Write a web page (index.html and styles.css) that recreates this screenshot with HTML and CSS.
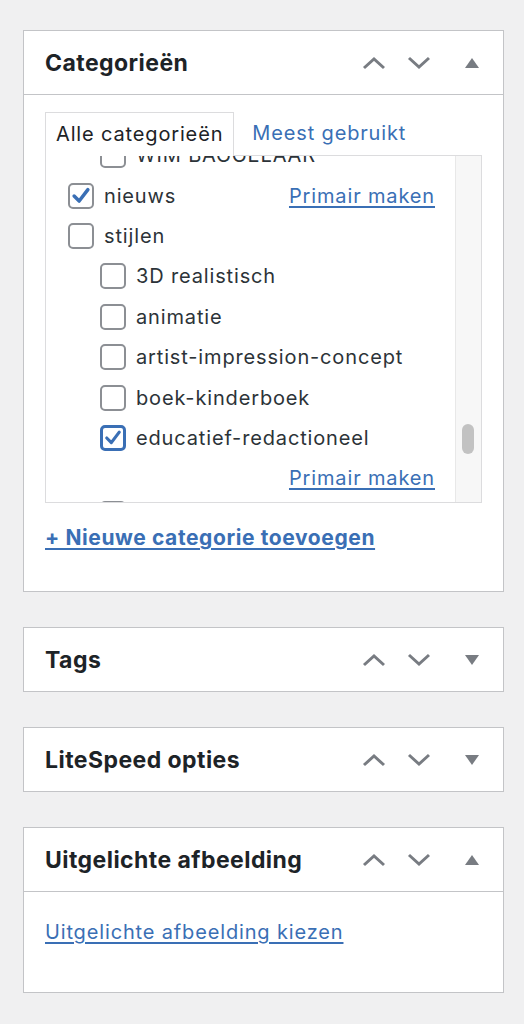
FILE: index.html
```html
<!DOCTYPE html>
<html lang="nl">
<head>
<meta charset="utf-8">
<title>Zijbalk</title>
<link rel="stylesheet" href="styles.css">
</head>
<body>
<div class="sidebar">

  <section class="box">
    <header class="box-head">
      <h2 class="box-title">Categorieën</h2>
      <div class="box-actions">
        <span class="act"><svg width="24" height="14" viewBox="0 0 24 14"><path d="M2 12 L12 3 L22 12" fill="none" stroke="currentColor" stroke-width="3"/></svg></span>
        <span class="act"><svg width="24" height="14" viewBox="0 0 24 14"><path d="M2 2 L12 11 L22 2" fill="none" stroke="currentColor" stroke-width="3"/></svg></span>
        <span class="tog"><svg width="14" height="10" viewBox="0 0 14 10"><path d="M0 10 L7 0 L14 10 Z" fill="currentColor"/></svg></span>
      </div>
    </header>
    <div class="box-body cat-body">
      <div class="tabs">
        <span class="tab active">Alle categorieën</span>
        <a class="tab link">Meest gebruikt</a>
      </div>
      <div class="catlist">
        <div class="cat-scroll">
          <ul class="cats">
            <li class="row sub"><span class="cb"></span><span class="lbl">WIM BAGGELAAR</span></li>
            <li class="row"><span class="cb checked"><svg viewBox="0 0 24 24" width="22" height="22"><path d="M4.5 12 L10 17.5 L19.5 5" fill="none" stroke="#3a6fb5" stroke-width="3.8" stroke-linecap="round" stroke-linejoin="round"/></svg></span><span class="lbl">nieuws</span><a class="primair">Primair maken</a></li>
            <li class="row"><span class="cb"></span><span class="lbl">stijlen</span></li>
            <li class="row sub"><span class="cb"></span><span class="lbl">3D realistisch</span></li>
            <li class="row sub"><span class="cb"></span><span class="lbl">animatie</span></li>
            <li class="row sub"><span class="cb"></span><span class="lbl">artist-impression-concept</span></li>
            <li class="row sub"><span class="cb"></span><span class="lbl">boek-kinderboek</span></li>
            <li class="row sub"><span class="cb checked focus"><svg viewBox="0 0 24 24" width="22" height="22"><path d="M4.5 12 L10 17.5 L19.5 5" fill="none" stroke="#3a6fb5" stroke-width="3.8" stroke-linecap="round" stroke-linejoin="round"/></svg></span><span class="lbl">educatief-redactioneel</span></li>
            <li class="row only-link"><a class="primair">Primair maken</a></li>
            <li class="row sub last"><span class="cb"></span></li>
          </ul>
        </div>
        <div class="track"><span class="thumb"></span></div>
      </div>
      <a class="add-link">+ Nieuwe categorie toevoegen</a>
    </div>
  </section>

  <section class="box">
    <header class="box-head">
      <h2 class="box-title">Tags</h2>
      <div class="box-actions">
        <span class="act"><svg width="24" height="14" viewBox="0 0 24 14"><path d="M2 12 L12 3 L22 12" fill="none" stroke="currentColor" stroke-width="3"/></svg></span>
        <span class="act"><svg width="24" height="14" viewBox="0 0 24 14"><path d="M2 2 L12 11 L22 2" fill="none" stroke="currentColor" stroke-width="3"/></svg></span>
        <span class="tog"><svg width="14" height="10" viewBox="0 0 14 10"><path d="M0 0 L14 0 L7 10 Z" fill="currentColor"/></svg></span>
      </div>
    </header>
  </section>

  <section class="box">
    <header class="box-head">
      <h2 class="box-title">LiteSpeed opties</h2>
      <div class="box-actions">
        <span class="act"><svg width="24" height="14" viewBox="0 0 24 14"><path d="M2 12 L12 3 L22 12" fill="none" stroke="currentColor" stroke-width="3"/></svg></span>
        <span class="act"><svg width="24" height="14" viewBox="0 0 24 14"><path d="M2 2 L12 11 L22 2" fill="none" stroke="currentColor" stroke-width="3"/></svg></span>
        <span class="tog"><svg width="14" height="10" viewBox="0 0 14 10"><path d="M0 0 L14 0 L7 10 Z" fill="currentColor"/></svg></span>
      </div>
    </header>
  </section>

  <section class="box">
    <header class="box-head">
      <h2 class="box-title">Uitgelichte afbeelding</h2>
      <div class="box-actions">
        <span class="act"><svg width="24" height="14" viewBox="0 0 24 14"><path d="M2 12 L12 3 L22 12" fill="none" stroke="currentColor" stroke-width="3"/></svg></span>
        <span class="act"><svg width="24" height="14" viewBox="0 0 24 14"><path d="M2 2 L12 11 L22 2" fill="none" stroke="currentColor" stroke-width="3"/></svg></span>
        <span class="tog"><svg width="14" height="10" viewBox="0 0 14 10"><path d="M0 10 L7 0 L14 10 Z" fill="currentColor"/></svg></span>
      </div>
    </header>
    <div class="box-body img-body">
      <a class="plain-link">Uitgelichte afbeelding kiezen</a>
    </div>
  </section>

</div>
</body>
</html>
```

FILE: styles.css
```css
* { box-sizing: border-box; }
html, body {
  margin: 0;
  padding: 0;
  background: #f0f0f1;
}
body {
  font-family: Inter, "Liberation Sans", Arial, sans-serif;
  color: #1d2327;
  font-size: 20px;
  letter-spacing: 0.85px;
}
.sidebar {
  padding: 30px 20px 0 23px;
  display: flex;
  flex-direction: column;
  gap: 35px;
}
.box {
  background: #fff;
  border: 1px solid #c3c4c7;
  width: 481px;
}
.box-head {
  height: 63px;
  display: flex;
  align-items: center;
  justify-content: space-between;
  padding-left: 21px;
}
.box-title {
  margin: 0;
  font-size: 23px;
  font-weight: 700;
  letter-spacing: 0.45px;
}
.box-actions {
  display: flex;
  align-items: center;
  color: #787c82;
  padding-right: 24px;
}
.act {
  display: flex;
  width: 45px;
  justify-content: center;
}
.tog {
  display: flex;
  width: 14px;
  margin-left: 24px;
}
.box-body {
  border-top: 1px solid #c3c4c7;
}
.cat-body {
  padding: 16px 21px 0 21px;
  height: 497px;
}
.tabs {
  display: flex;
  align-items: center;
  height: 44px;
}
.tab {
  display: flex;
  align-items: center;
  height: 44px;
  padding: 0 10px;
}
.tab.active {
  border: 1px solid #dcdcde;
  border-bottom: 0;
  position: relative;
  margin-bottom: -1px;
  background: #fff;
  z-index: 1;
}
.tab.link {
  color: #3a6fb5;
  padding-left: 18px;
}
.catlist {
  height: 348px;
  width: 437px;
  border: 1px solid #dcdcde;
  display: flex;
}
.cat-scroll {
  flex: 1;
  overflow: hidden;
}
.cats {
  list-style: none;
  margin: -21px 0 0 0;
  padding: 0 20px 0 22px;
}
.row {
  height: 40.4px;
  display: flex;
  align-items: center;
  color: #2c3338;
}
.row.sub { padding-left: 32px; }
.row.only-link { justify-content: flex-end; }
.row.last { margin-top: -5px; }
.cb {
  width: 26px;
  height: 26px;
  border: 2px solid #8c8f94;
  border-radius: 5px;
  margin-right: 10px;
  flex: none;
  display: flex;
  align-items: center;
  justify-content: center;
}
.cb.focus {
  border-color: #3a6fb5;
  border-width: 3px;
}
.lbl { white-space: nowrap; }
.primair {
  margin-left: auto;
  color: #3a6fb5;
  text-decoration: underline;
  text-underline-offset: 3px;
  text-decoration-thickness: 1.5px;
}
.track {
  width: 26px;
  flex: none;
  background: #f7f7f7;
  border-left: 1px solid #e8e8e8;
  position: relative;
}
.thumb {
  position: absolute;
  left: 6px;
  top: 268px;
  width: 12px;
  height: 30px;
  border-radius: 6px;
  background: #c2c2c2;
}
.add-link {
  display: block;
  margin-top: 22px;
  font-weight: 700;
  font-size: 21px;
  letter-spacing: 0.6px;
  color: #3a6fb5;
  text-decoration: underline;
  text-underline-offset: 3px;
  text-decoration-thickness: 1.5px;
}
.img-body {
  height: 101px;
  padding: 28px 21px 0 21px;
}
.plain-link {
  color: #3a6fb5;
  text-decoration: underline;
  text-underline-offset: 3px;
  text-decoration-thickness: 1.5px;
}
```
